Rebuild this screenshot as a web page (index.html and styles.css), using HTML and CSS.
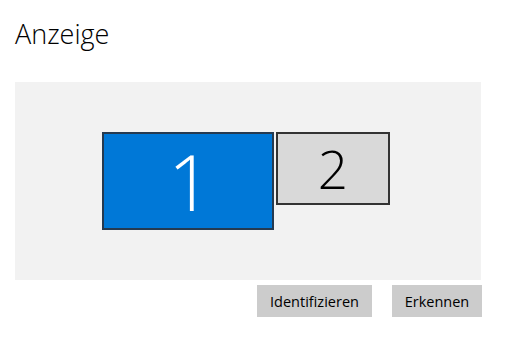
FILE: index.html
```html
<!DOCTYPE html>
<html lang="de">
<head>
    <meta charset="UTF-8">
    <title>Anzeige</title>
    <link rel="stylesheet" href="styles.css">
</head>
<body>
    <div class="page">
        <h1 class="title">Anzeige</h1>
        <div class="display-area">
            <div class="monitors">
                <div class="monitor monitor-main">1</div>
                <div class="monitor monitor-second">2</div>
            </div>
        </div>
        <div class="actions">
            <button class="btn btn-identify">Identifizieren</button>
            <button class="btn btn-detect">Erkennen</button>
        </div>
    </div>
</body>
</html>
```

FILE: styles.css
```css
body {
    margin: 0;
    background-color: #ffffff;
    font-family: 'Open Sans', 'Noto Sans', sans-serif;
    color: #000000;
}
.page {
    width: 466px;
    padding: 0 15px;
}
.title {
    margin: 0;
    padding-top: 15px;
    height: 82px;
    box-sizing: border-box;
    font-size: 27px;
    font-weight: 300;
    line-height: 38px;
}
.display-area {
    height: 198px;
    background-color: #f2f2f2;
    display: flex;
    justify-content: center;
    align-items: center;
}
.monitors {
    display: flex;
    align-items: flex-start;
    gap: 2px;
    margin-right: 4px;
}
.monitor {
    box-sizing: border-box;
    display: flex;
    justify-content: center;
    align-items: center;
    border: 2px solid #2b2b2b;
    font-weight: 300;
}
.monitor-main {
    width: 172px;
    height: 98px;
    background-color: #0078d7;
    border-color: #253a50;
    color: #ffffff;
    font-size: 77px;
    padding-left: 4px;
}
.monitor-second {
    width: 114px;
    height: 73px;
    background-color: #d9d9d9;
    border-color: #333333;
    color: #000000;
    font-size: 53px;
}
.actions {
    display: flex;
    justify-content: flex-end;
    gap: 20px;
    margin-top: 5px;
}
.btn {
    height: 32px;
    border: none;
    background-color: #cccccc;
    color: #000000;
    font-family: 'Open Sans', 'Noto Sans', sans-serif;
    font-size: 14.5px;
    padding: 0;
}
.btn-identify {
    width: 115px;
}
.btn-detect {
    width: 90px;
    margin-right: -1px;
}
```
